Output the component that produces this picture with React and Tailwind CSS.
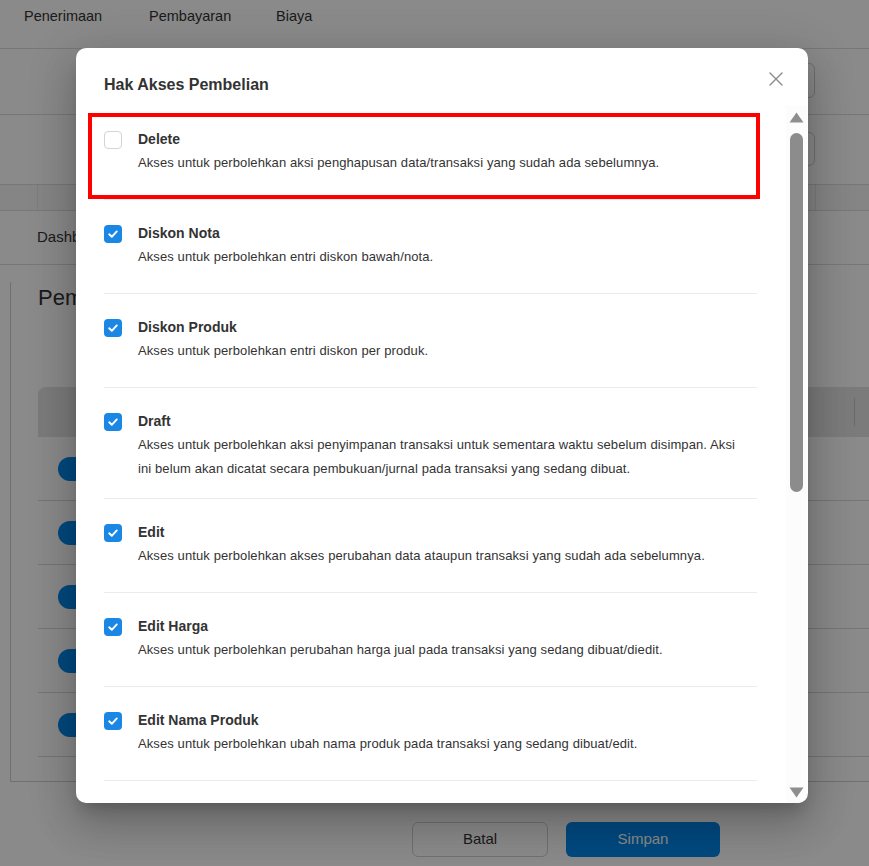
import React from 'react';

const font = { fontFamily: '"Liberation Sans", Arial, sans-serif' };

const permissions = [
  {
    title: 'Delete',
    desc: ['Akses untuk perbolehkan aksi penghapusan data/transaksi yang sudah ada sebelumnya.'],
    checked: false,
    marked: true,
  },
  { title: 'Diskon Nota', desc: ['Akses untuk perbolehkan entri diskon bawah/nota.'], checked: true },
  { title: 'Diskon Produk', desc: ['Akses untuk perbolehkan entri diskon per produk.'], checked: true },
  {
    title: 'Draft',
    desc: [
      'Akses untuk perbolehkan aksi penyimpanan transaksi untuk sementara waktu sebelum disimpan. Aksi',
      'ini belum akan dicatat secara pembukuan/jurnal pada transaksi yang sedang dibuat.',
    ],
    checked: true,
  },
  {
    title: 'Edit',
    desc: ['Akses untuk perbolehkan akses perubahan data ataupun transaksi yang sudah ada sebelumnya.'],
    checked: true,
  },
  {
    title: 'Edit Harga',
    desc: ['Akses untuk perbolehkan perubahan harga jual pada transaksi yang sedang dibuat/diedit.'],
    checked: true,
  },
  {
    title: 'Edit Nama Produk',
    desc: ['Akses untuk perbolehkan ubah nama produk pada transaksi yang sedang dibuat/edit.'],
    checked: true,
  },
];

const Checkbox = ({ checked }) =>
  checked ? (
    <div className="mt-[2px] flex h-[18px] w-[18px] shrink-0 items-center justify-center rounded-[4px] bg-[#1a87e5]">
      <svg width="12" height="12" viewBox="0 0 12 12">
        <polyline points="2.2,6.3 4.8,8.8 9.8,3.4" fill="none" stroke="white" strokeWidth="1.9" strokeLinecap="round" strokeLinejoin="round" />
      </svg>
    </div>
  ) : (
    <div className="mt-[2px] h-[18px] w-[18px] shrink-0 rounded-[4px] border border-[#d4d4d4] bg-white" />
  );

const Background = () => (
  <div className="flex h-full flex-col bg-white text-[#333]">
    {/* top tabs */}
    <div className="flex h-[49px] shrink-0 items-start border-b border-[#dcdcdc] px-6 pt-[6px] text-[14.5px]">
      <span className="w-[125px]">Penerimaan</span>
      <span className="w-[127px]">Pembayaran</span>
      <span>Biaya</span>
    </div>

    {/* form rows */}
    <div className="flex h-[66px] items-start justify-end border-b border-[#dcdcdc] pr-[54px] pt-[14px]">
      <div className="h-[35px] w-[320px] rounded-[6px] border border-[#cfcfcf]" />
    </div>
    <div className="flex h-[70px] items-start justify-end border-b border-[#dcdcdc] pr-[54px] pt-[17px]">
      <div className="h-[34px] w-[320px] rounded-[6px] border border-[#cfcfcf]" />
    </div>
    <div className="flex h-[26px] border-b border-[#dcdcdc] bg-[#f6f6f6]">
      <div className="w-[38px] border-r border-[#e6e6e6]" />
      <div className="flex-1" />
      <div className="w-[54px] border-l border-[#e6e6e6]" />
    </div>

    {/* breadcrumb */}
    <div className="flex h-[54px] items-center border-b border-[#dcdcdc] pl-[37px] text-[15px]">
      Dashboard
    </div>

    {/* content card */}
    <div className="ml-[10px] mt-[17px] flex h-[500px] flex-col border-b border-l border-[#cfcfcf] pl-[27px]">
      <div className="mt-[2px] text-[22px] leading-[28px]">Pembelian</div>
      <div className="mt-[75px] flex h-[50px] items-center justify-end rounded-tl-[8px] bg-[#e3e3e3] pr-[14px]">
        <div className="h-[28px] w-px bg-[#c4c4c4]" />
      </div>
      {[0, 1, 2, 3, 4].map((i) => (
        <div key={i} className="flex h-[64px] items-center border-b border-[#d8d8d8] pl-[20px]">
          <div className="h-[24px] w-[90px] rounded-full bg-[#0088ea]" />
        </div>
      ))}
    </div>

    {/* footer buttons */}
    <div className="mt-[40px] flex gap-[18px] pl-[412px]">
      <div className="flex h-[35px] w-[136px] items-center justify-center rounded-[6px] border border-[#cfcfcf] text-[15px]">
        Batal
      </div>
      <div className="flex h-[35px] w-[154px] items-center justify-center rounded-[6px] bg-[#0088ea] text-[15px] text-white">
        Simpan
      </div>
    </div>
  </div>
);

const ScrollBar = () => (
  <div className="ml-[29px] mr-[1px] flex w-[21px] shrink-0 flex-col items-center bg-[#fcfcfc] pb-[5px] pt-[6px]">
    <svg width="15" height="11" viewBox="0 0 15 11">
      <path d="M7.5 0.5 L14.5 10.5 L0.5 10.5 Z" fill="#8e8e8e" />
    </svg>
    <div className="mt-[10px] h-[359px] w-[13px] rounded-full bg-[#8c8c8c]" />
    <div className="flex-1" />
    <svg width="15" height="11" viewBox="0 0 15 11">
      <path d="M0.5 0.5 L14.5 0.5 L7.5 10.5 Z" fill="#8e8e8e" />
    </svg>
  </div>
);

const PermissionModal = () => (
  <div className="absolute left-[76px] top-[48px] flex h-[755px] w-[732px] flex-col overflow-hidden rounded-[10px] bg-white shadow-[0_11px_15px_-7px_rgba(0,0,0,0.2),0_24px_38px_3px_rgba(0,0,0,0.14),0_9px_46px_8px_rgba(0,0,0,0.12)]">
    <div className="relative flex shrink-0 items-start pb-[11px] pl-[28px] pt-[27px]">
      <h2 className="text-[16px] font-bold leading-[20px] text-[#333]">Hak Akses Pembelian</h2>
      <svg className="absolute right-[25px] top-[24px]" width="14" height="14" viewBox="0 0 14 14">
        <path d="M1 1 L13 13 M13 1 L1 13" stroke="#8a8a8a" strokeWidth="1.4" strokeLinecap="round" />
      </svg>
    </div>

    <div className="flex min-h-0 flex-1">
      <div className="min-w-0 flex-1 pl-[28px]">
        {permissions.map((p) => (
          <div key={p.title} className="relative flex min-h-[94px] gap-[16px] border-b border-[#ebebeb] pb-[17px] pt-[23px]">
            <Checkbox checked={p.checked} />
            <div className="min-w-0 flex-1">
              <div className="text-[14px] font-bold leading-[20px] text-[#333]">{p.title}</div>
              <p className="mt-[2px] text-[13px] leading-[24px] tracking-[0.1px] text-[#333]">
                {p.desc.map((line, i) => (
                  <React.Fragment key={i}>
                    {i > 0 && <br />}
                    {line}
                  </React.Fragment>
                ))}
              </p>
            </div>
            {p.marked && (
              <div className="pointer-events-none absolute -left-[16px] -right-[3px] bottom-0 top-[7px] border-4 border-[#ff0000]" />
            )}
          </div>
        ))}
      </div>
      <ScrollBar />
    </div>
  </div>
);

export default function App() {
  return (
    <div className="relative h-[866px] w-full overflow-hidden" style={font}>
      <Background />
      <div className="absolute inset-0 bg-black/[0.46]" />
      <PermissionModal />
    </div>
  );
}
